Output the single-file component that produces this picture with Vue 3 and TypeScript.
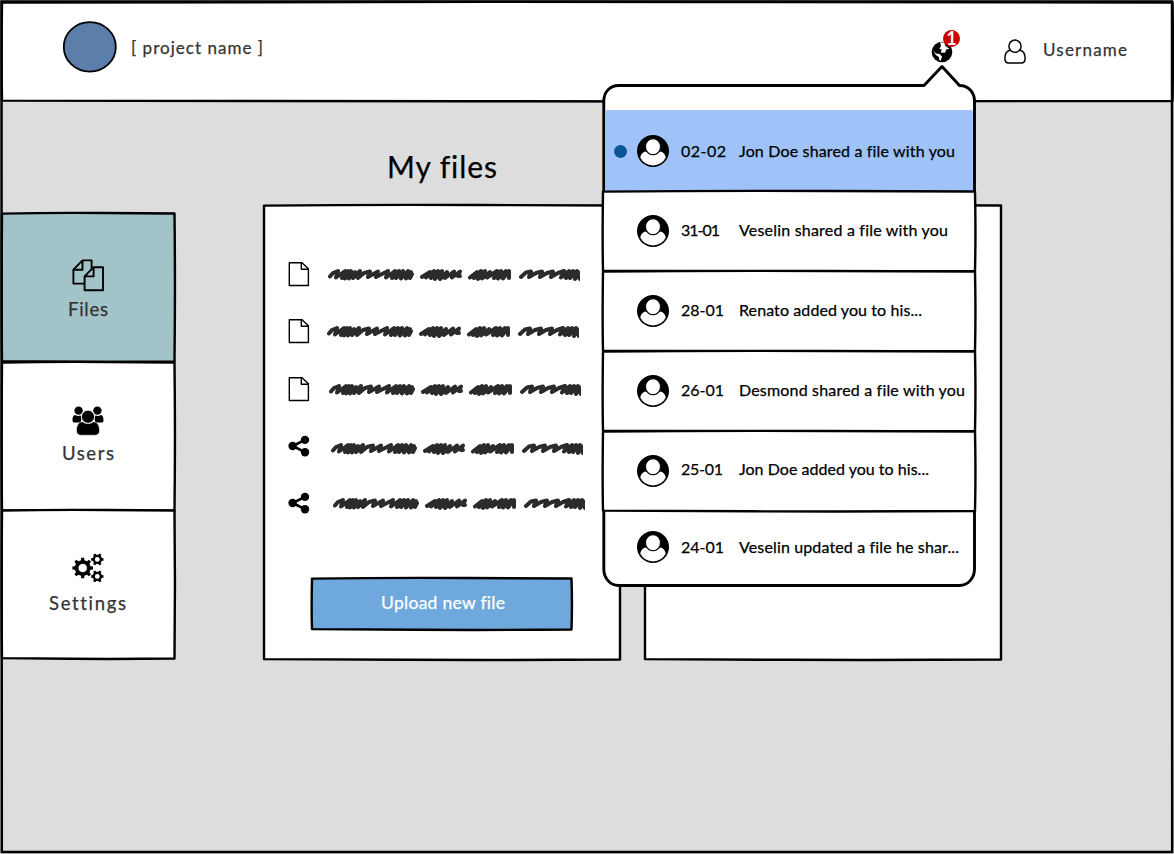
<script setup lang="ts">
import { h } from 'vue'

interface NavItem { id: string; label: string; width: number; active?: boolean }
interface FileRow { icon: 'file' | 'share'; dx: number; dy: number }
interface Notice { date: string; dateWidth: number; text: string; width: number; unread?: boolean }

// Hand-drawn rectangle: slightly bowed edges around a w x h box
const SketchFrame = (props: { w: number; h: number; fill?: string }) => {
  const { w, h: t } = props
  const d = `M0 0.6 Q${w * 0.3} -0.5 ${w * 0.6} 0 T${w} 0.5 Q${w + 0.9} ${t * 0.5} ${w} ${t} ` +
    `Q${w * 0.7} ${t + 0.7} ${w * 0.4} ${t + 0.3} T0 ${t - 0.4} Q-0.7 ${t * 0.6} 0 0.6Z`
  return h('svg', { class: 'sketch-frame', width: w, height: t, viewBox: `0 0 ${w} ${t}` }, [
    h('path', { d, fill: props.fill ?? '#fff', stroke: '#000', 'stroke-width': 2.4, 'stroke-linejoin': 'round' }),
  ])
}
SketchFrame.props = ['w', 'h', 'fill']

// Single text line set to a fixed measure
const Line = (props: { text: string; w: number; size: number }) =>
  h('svg', { class: 'line-text', width: props.w, height: 24, viewBox: `0 0 ${props.w} 24` }, [
    h('text', { x: 0, y: 18, 'font-size': props.size, textLength: props.w, lengthAdjust: 'spacing' }, props.text),
  ])
Line.props = ['text', 'w', 'size']

function gear(cx: number, cy: number, outer: number, root: number, hole: number, teeth: number): string {
  const pts: string[] = []
  const step = (Math.PI * 2) / teeth
  for (let i = 0; i < teeth; i++) {
    const a = i * step
    for (const [f, r] of [[-0.27, root], [-0.19, outer], [0.19, outer], [0.27, root]]) {
      pts.push(`${(cx + r * Math.cos(a + f * step)).toFixed(2)} ${(cy + r * Math.sin(a + f * step)).toFixed(2)}`)
    }
  }
  return `M${pts.join('L')}ZM${cx - hole} ${cy}a${hole} ${hole} 0 1 0 ${hole * 2} 0a${hole} ${hole} 0 1 0 ${-hole * 2} 0Z`
}
const gears = gear(10.7, 15, 10.4, 8, 4.3, 8) + gear(25.3, 6.4, 6.3, 4.8, 2.4, 6) + gear(25.3, 23.4, 6.3, 4.8, 2.4, 6)

const nav: NavItem[] = [
  { id: 'files', label: 'Files', width: 40, active: true },
  { id: 'users', label: 'Users', width: 52 },
  { id: 'settings', label: 'Settings', width: 77 },
]

const files: FileRow[] = [
  { icon: 'file', dx: 0, dy: 0 },
  { icon: 'file', dx: -1, dy: 0 },
  { icon: 'file', dx: 1, dy: 0 },
  { icon: 'share', dx: 3, dy: 1.3 },
  { icon: 'share', dx: 5, dy: 0 },
]

const notices: Notice[] = [
  { date: '02-02', dateWidth: 45, text: 'Jon Doe shared a file with you', width: 216, unread: true },
  { date: '31-01', dateWidth: 39, text: 'Veselin shared a file with you', width: 209 },
  { date: '28-01', dateWidth: 43, text: 'Renato added you to his...', width: 183 },
  { date: '26-01', dateWidth: 43, text: 'Desmond shared a file with you', width: 226 },
  { date: '25-01', dateWidth: 42, text: 'Jon Doe added you to his...', width: 190 },
  { date: '24-01', dateWidth: 43, text: 'Veselin updated a file he shar...', width: 220 },
]

const scribble =
  'M2 10.5L5 7L10 5L8 11.5L17 5L14 12L20 5L17 12.5L23 5L21 12.5L27 6L25 12L32 5L30 12L36 7L42 5.5L40 11L50 5.5L48 11L60 5L58 11.5L67 5L64 12L71 5L68 12L75 5L73 12.5L80 5L78 12.5L83 6L82 12L84 8' +
  'M94 11L102 6L98 11.5L106 5L103 12L110 5L107 13L114 5L112 13L119 6L117 12L126 5.5L124 11.5L132 5.5L130 10L132 10' +
  'M142 11.5L149 6L146 12L153 5L150 13L157 5L154 12.5L162 6L159 11.5L169 5L166 12L173 5L170 12.5L178 5L175 12.5L181 5L181 12' +
  'M193 11L198 6.5L203 5.5L201 11L208 7L214 5.5L212 11L219 7L225 5.5L223 11L230 7L236 5L233 11.5L241 5L238 12L245 5L242 12L249 5L247 13L253 6L252 13'
</script>

<template>
  <div class="page">
    <header class="topbar">
      <SketchFrame :w="1170.5" :h="99" />
      <svg class="logo" width="56" height="54" viewBox="0 0 56 54">
        <ellipse cx="27.8" cy="26.9" rx="26" ry="24.7" fill="#5b7eaa" stroke="#000" stroke-width="1.8" />
      </svg>
      <Line class="brand" text="[ project name ]" :w="132" :size="17" />
      <div class="globe">
        <svg width="22" height="22" viewBox="0 0 22 22">
          <circle cx="11" cy="11" r="10.3" fill="#000" />
          <path d="M9 1.5L13.5 1.3L14 4.5L18.5 8L15.5 8.3L14 11.8L9.5 11.5L11 8.5L8.3 8L10 5Z" fill="#fff" />
          <path d="M2.3 9.8L5 12.5L8.5 13L11 15.5L9.8 19.8L8.3 19L7.8 16L4.8 14Z" fill="#fff" />
        </svg>
        <span class="badge">1</span>
      </div>
      <svg class="person" width="24" height="26" viewBox="0 0 24 26">
        <path d="M7.1 11.2C3.2 12 1.9 15.8 1.9 19.5C1.9 22.5 3.2 24 5.7 24H18.3C20.8 24 22.1 22.5 22.1 19.5C22.1 15.8 20.8 12 16.9 11.2" />
        <circle cx="12" cy="7.2" r="6.1" />
      </svg>
      <Line class="username" text="Username" :w="84" :size="17" />
    </header>

    <div class="body">
      <nav class="sidebar">
        <a v-for="item in nav" :key="item.id" class="nav-item" :class="'nav-' + item.id">
          <SketchFrame :w="172.5" :h="148.5" :fill="item.active ? '#a2c3c8' : '#fff'" />
          <svg v-if="item.id === 'files'" class="nav-icon" width="32" height="33" viewBox="0 0 32 33">
            <g fill="none" stroke="#000" stroke-width="1.9" stroke-linejoin="round">
              <path d="M12.5 24.6H1.4V10.7L10.5 1.4H19.6V9.5M10.5 1.4V10.7H1.4" />
              <path d="M21.6 8.2H31V31.2H12.6V17.4ZM21.6 8.2V17.4H12.6" />
            </g>
          </svg>
          <svg v-else-if="item.id === 'users'" class="nav-icon" width="32" height="33" viewBox="0 0 32 33">
            <circle cx="6.6" cy="5.6" r="4.2" />
            <circle cx="25.4" cy="5.6" r="4.2" />
            <path d="M3.2 10C1 10 .5 13 .5 15.4C.5 17 1.5 17.5 3 17.5H8.5L10 13L8.5 10.5Q5.5 11.5 3.2 10ZM28.8 10C31 10 31.5 13 31.5 15.4C31.5 17 30.5 17.5 29 17.5H23.5L22 13L23.5 10.5Q26.5 11.5 28.8 10Z" />
            <circle cx="16" cy="11.7" r="6.6" stroke="#fff" stroke-width="1" />
            <path d="M10.4 16.8C6.4 17 4.5 20.8 4.5 25.5C4.5 28.8 6.3 30.2 9 30.2H23C25.7 30.2 27.5 28.8 27.5 25.5C27.5 20.8 25.6 17 21.6 16.8Q16 20.8 10.4 16.8Z" stroke="#fff" stroke-width=".5" />
          </svg>
          <svg v-else class="nav-icon" width="32" height="33" viewBox="0 0 32 33">
            <path :d="gears" fill-rule="evenodd" />
          </svg>
          <Line :text="item.label" :w="item.width" :size="18.5" />
        </a>
      </nav>

      <main class="content">
        <h1><Line text="My files" :w="110" :size="30" /></h1>
        <div class="cards">
          <section class="card">
            <SketchFrame :w="356" :h="454.5" />
            <ul class="files">
              <li v-for="(row, i) in files" :key="i">
                <svg v-if="row.icon === 'file'" width="22" height="26" viewBox="0 0 22 26">
                  <path d="M1.3 1.7H14L20.4 7.8V24.5H1.3ZM13.3 1.7V8.3H20.4" fill="#fff" stroke="#000" stroke-width="1.4" stroke-linejoin="round" />
                </svg>
                <svg v-else width="22" height="26" viewBox="0 0 22 26">
                  <path d="M4.7 13L17 6.8M4.7 13L17 19.2" stroke="#000" stroke-width="2.6" />
                  <circle cx="4.6" cy="13" r="4.2" /><circle cx="17" cy="6.9" r="4.2" /><circle cx="17" cy="19.2" r="4.2" />
                </svg>
                <svg class="scribble" width="252" height="16" viewBox="0 0 252 16" :style="{ marginLeft: 17.5 + row.dx + 'px', marginTop: row.dy * 2 + 'px' }">
                  <path :d="scribble" />
                </svg>
              </li>
            </ul>
            <button class="upload" type="button">
              <SketchFrame :w="259.5" :h="51.5" fill="#6fa8dc" />
              <Line text="Upload new file" :w="124" :size="17.5" />
            </button>
          </section>
          <section class="card">
            <SketchFrame :w="356" :h="454.5" />
          </section>
        </div>
      </main>
    </div>

    <svg class="page-edge" width="1174" height="854" viewBox="0 0 1174 854">
      <path d="M1.5 1.5Q600 .8 1172 1.5Q1171.2 430 1172.2 852Q600 851.4 1.8 852Q2 430 1.5 1.5Z" />
    </svg>

    <aside class="popover">
      <svg class="popover-shape" width="376" height="524" viewBox="0 0 376 524">
        <path d="M16.5 21.5H322L340 2.5L357.5 21.5C367 21.5 372.5 29 372.5 37V505C372.5 514 366 521.5 357.5 521.5H16.5C8 521.5 1.8 514 1.8 505V37C1.8 28 8 21.5 16.5 21.5Z" />
      </svg>
      <ul class="notices">
        <li v-for="(n, i) in notices" :key="n.date" :class="{ unread: n.unread, last: i === 5 }">
          <SketchFrame v-if="i > 0 && i < 5" :w="372" :h="80" />
          <i class="dot"></i>
          <svg class="avatar" width="34" height="34" viewBox="-17 -17 34 34">
            <circle r="16" />
            <path d="M-12.8 6.6C-12 3 -9.8 1 -7.2 .6Q0 8 7.2 .6C9.8 1 12 3 12.8 6.6A14.4 14.4 0 0 1 -12.8 6.6Z" fill="#fff" />
            <ellipse cy="-4.3" rx="7.5" ry="8.1" fill="#fff" stroke="#000" stroke-width="1.1" />
          </svg>
          <span class="date"><Line :text="n.date" :w="n.dateWidth" :size="16" /></span>
          <Line class="message" :text="n.text" :w="n.width" :size="16" />
        </li>
      </ul>
    </aside>
  </div>
</template>

<style>
body { margin: 0; }
svg { display: block; flex: none; }
.sketch-frame { position: absolute; left: 0; top: 0; overflow: visible; z-index: -1; }
.line-text { overflow: visible; font-family: Lato, "Noto Sans", sans-serif; font-weight: 400; font-variant-ligatures: none; fill: currentColor; stroke: currentColor; stroke-width: 0.25px; }
</style>

<style scoped>
.page { position: relative; width: 1174px; height: 854px; overflow: hidden; background: #dddddd; color: #000; box-sizing: border-box; isolation: isolate; font-family: Lato, "Noto Sans", sans-serif; }
.topbar { position: relative; z-index: 0; margin: 0 1.5px; top: 1.5px; height: 99px; display: flex; align-items: flex-start; color: #333; }
.logo { margin: 18.5px 0 0 60.5px; }
.brand { margin: 34.5px 0 0 12.5px; }
.globe { position: relative; margin: 39.3px 0 0 668px; }
.badge { position: absolute; left: 12.5px; top: -10.8px; width: 17px; height: 17px; border-radius: 50%; background: #cc0000; color: #fff; font-size: 18px; font-weight: 700; line-height: 17px; text-align: center; }
.person { margin: 37.3px 0 0 50.3px; fill: #fff; stroke: #000; stroke-width: 1.5; }
.username { margin: 36.5px 0 0 16.5px; }
.body { display: flex; align-items: flex-start; }
.sidebar { width: 172.5px; margin: 114.3px 0 0 1.5px; display: flex; flex-direction: column; color: #333; }
.nav-item { position: relative; z-index: 0; height: 148.5px; display: flex; flex-direction: column; align-items: center; }
.nav-icon { margin: 45.5px 0 6.5px; fill: #000; }
.nav-users .nav-icon { margin: 43px 0 4.5px; }
.nav-settings .nav-icon { margin: 43px 0 5.5px; }
.content { margin: 47.8px 0 0 90px; }
h1 { margin: 0; height: 58px; padding: 13.5px 0 0 122.5px; box-sizing: border-box; font-weight: 400; }
.cards { display: flex; gap: 24.7px; }
.card { position: relative; z-index: 0; width: 356px; height: 454.5px; }
.files { list-style: none; margin: 0; padding: 40.5px 0 0 24px; display: grid; grid-template-rows: 57px 57px 59px 56px 57px; }
.files li { display: flex; align-items: center; }
.scribble { fill: none; stroke: #2b2b2b; stroke-width: 4; stroke-linecap: round; stroke-linejoin: round; }
.upload { position: relative; z-index: 0; display: flex; justify-content: center; width: 259.5px; height: 51.5px; margin: 47px 0 0 48px; padding: 12.5px 0 0 1.5px; border: 0; background: none; color: #fff; box-sizing: border-box; align-items: flex-start; }
.page-edge { position: absolute; left: 0; top: 0; fill: none; stroke: #000; stroke-width: 2.5; pointer-events: none; }
.popover { position: absolute; left: 602px; top: 64px; width: 376px; height: 524px; z-index: 2; }
.popover-shape { position: absolute; left: 0; top: 0; fill: #fff; stroke: #000; stroke-width: 2.9; stroke-linejoin: round; }
.notices { position: relative; list-style: none; margin: 0; padding: 46.3px 0 0 1.3px; }
.notices li { position: relative; z-index: 0; height: 79.8px; width: 372px; display: flex; align-items: center; box-sizing: border-box; }
.notices li.unread { height: 81px; width: 368px; margin-left: 1.7px; background: #9fc3f8; border-radius: 2px; }
.notices li.last { height: 74px; }
.dot { width: 13px; height: 13px; margin-left: 10.5px; border-radius: 50%; }
.unread .dot { background: #0b5394; margin: 2px 0 0 8.8px; }
.avatar { margin-left: 9.2px; }
.date { width: 46px; margin: 0 12px 0 11px; }
.notices li:not(.unread):not(.last) .date, .notices li:not(.unread):not(.last) .message { margin-bottom: 2.5px; }
</style>
